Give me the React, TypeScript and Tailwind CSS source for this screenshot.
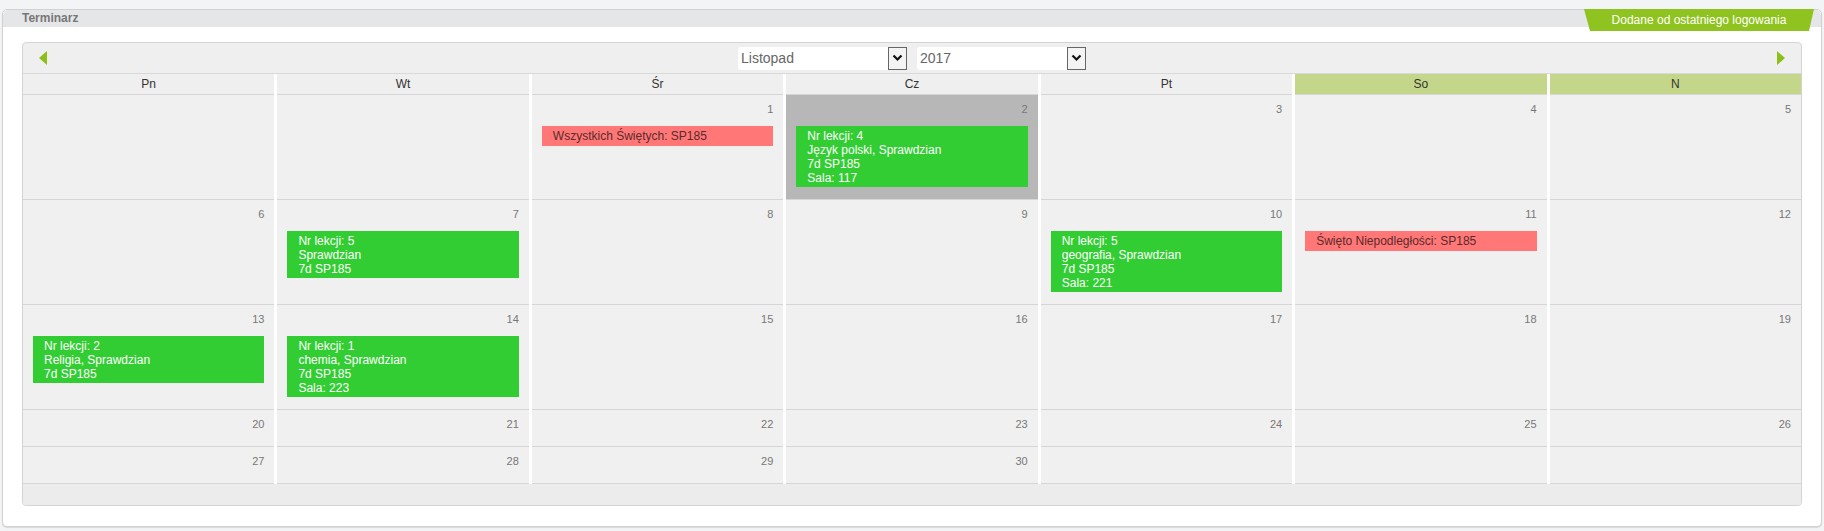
import React from "react";

type Ev = { kind: "lesson"; lines: string[] } | { kind: "holiday"; text: string };

const days = ["Pn", "Wt", "Śr", "Cz", "Pt", "So", "N"];

const weeks: (number | null)[][] = [
  [null, null, 1, 2, 3, 4, 5],
  [6, 7, 8, 9, 10, 11, 12],
  [13, 14, 15, 16, 17, 18, 19],
  [20, 21, 22, 23, 24, 25, 26],
  [27, 28, 29, 30, null, null, null],
];

const events: Record<number, Ev[]> = {
  1: [{ kind: "holiday", text: "Wszystkich Świętych: SP185" }],
  2: [{ kind: "lesson", lines: ["Nr lekcji: 4", "Język polski, Sprawdzian", "7d SP185", "Sala: 117"] }],
  7: [{ kind: "lesson", lines: ["Nr lekcji: 5", "Sprawdzian", "7d SP185"] }],
  10: [{ kind: "lesson", lines: ["Nr lekcji: 5", "geografia, Sprawdzian", "7d SP185", "Sala: 221"] }],
  11: [{ kind: "holiday", text: "Święto Niepodległości: SP185" }],
  13: [{ kind: "lesson", lines: ["Nr lekcji: 2", "Religia, Sprawdzian", "7d SP185"] }],
  14: [{ kind: "lesson", lines: ["Nr lekcji: 1", "chemia, Sprawdzian", "7d SP185", "Sala: 223"] }],
};

const TODAY = 2;

function Chevron() {
  return (
    <svg width="11" height="8" viewBox="0 0 11 8">
      <polyline points="1.5,1.5 5.5,5.5 9.5,1.5" fill="none" stroke="#111" strokeWidth="2.2" />
    </svg>
  );
}

function FakeSelect({ value }: { value: string }) {
  return (
    <div className="flex h-[23px] w-[169px] items-center rounded-[3px] bg-white">
      <span className="flex-1 pl-[3px] text-[14px] text-[#666]">{value}</span>
      <span className="flex h-[23px] w-[19px] items-center justify-center border border-[#666] bg-[#f4f4f4]">
        <Chevron />
      </span>
    </div>
  );
}

function EventBox({ ev }: { ev: Ev }) {
  if (ev.kind === "holiday") {
    return (
      <div className="bg-[#ff7777] py-[3px] pl-[11px] text-[12px] leading-[14px] text-[#5a2a2a]">{ev.text}</div>
    );
  }
  return (
    <div className="bg-[#32cd32] pt-[3px] pb-[2px] pl-[11px] text-[12px] leading-[14px] text-white">
      {ev.lines.map((l) => (
        <div key={l}>{l}</div>
      ))}
    </div>
  );
}

function DayCell({ day }: { day: number | null }) {
  const evs = day ? events[day] : undefined;
  return (
    <div
      className={
        "border-b border-[#d6d6d6] pt-[7px] " +
        (day === TODAY ? "bg-[#b7b7b7] " : "bg-[#f0f0f0] ") +
        (evs ? "pb-0" : "pb-[15px]")
      }
    >
      <div className="h-[14px] pr-[10px] text-right text-[11px] leading-[14px] text-[#777]">{day ?? ""}</div>
      {evs && (
        <div className="mx-[10px] mt-[10px] mb-[12px] flex flex-col gap-[2px]">
          {evs.map((ev, i) => (
            <EventBox key={i} ev={ev} />
          ))}
        </div>
      )}
    </div>
  );
}

export default function App() {
  return (
    <div className="min-h-[531px] bg-[#f3f4f5] px-[2px] pt-[9px] pb-[3px] font-['Liberation_Sans',Arial,sans-serif]">
      <div className="rounded-[5px] border border-[#d2d2d2] bg-white shadow-[0_1px_1px_rgba(0,0,0,0.12)]">
        <div className="flex h-[17px] items-start justify-between rounded-t-[5px] bg-[#e5e6e7] pl-[19px] pr-[7px]">
          <span className="text-[12px] leading-[17px] font-bold text-[#777]">Terminarz</span>
          <div className="relative z-10 mt-[-1px] flex h-[22px] w-[230px] items-center justify-center bg-[#8fc31f] text-[12px] text-white [clip-path:polygon(0_0,100%_0,calc(100%-5px)_100%,6px_100%)]">
            Dodane od ostatniego logowania
          </div>
        </div>

        <div className="px-[19px] pt-[15px] pb-[20px]">
          <div className="overflow-hidden rounded-[4px] border border-[#d4d4d4] bg-[#efefef]">
            <div className="flex h-[31px] items-center justify-between border-b border-[#d9d9d9] px-[16px]">
              <div className="h-0 w-0 border-y-[7.5px] border-r-[8px] border-y-transparent border-r-[#8cbf1a]" />
              <div className="flex gap-[10px]">
                <FakeSelect value="Listopad" />
                <FakeSelect value="2017" />
              </div>
              <div className="h-0 w-0 border-y-[7.5px] border-l-[8px] border-y-transparent border-l-[#8cbf1a]" />
            </div>

            <div className="grid grid-cols-7 gap-x-[3px] bg-white">
              {days.map((d, i) => (
                <div
                  key={d}
                  className={
                    "h-[21px] border-b border-[#d6d6d6] text-center text-[12px] leading-[20px] text-[#333] " +
                    (i >= 5 ? "bg-[#c4d68a]" : "bg-[#efefef]")
                  }
                >
                  {d}
                </div>
              ))}
            </div>

            {weeks.map((w, wi) => (
              <div key={wi} className="grid grid-cols-7 gap-x-[3px] bg-white">
                {w.map((day, di) => (
                  <DayCell key={di} day={day} />
                ))}
              </div>
            ))}

            <div className="h-[21px] bg-[#ececec]" />
          </div>
        </div>
      </div>
    </div>
  );
}
